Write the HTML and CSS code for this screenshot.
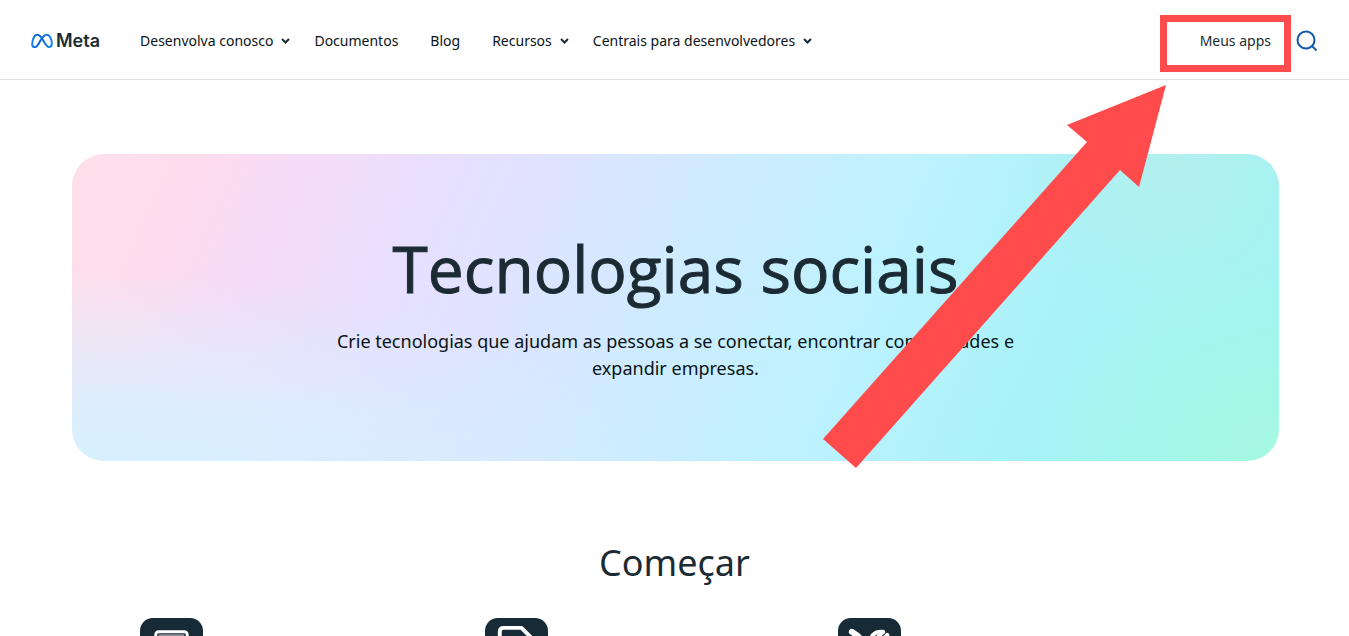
FILE: index.html
```html
<!DOCTYPE html>
<html lang="pt-BR">
<head>
<meta charset="utf-8">
<meta name="viewport" content="width=device-width, initial-scale=1">
<title>Meta for Developers</title>
<link rel="stylesheet" href="styles.css">
</head>
<body>
<header class="header">
  <a class="logo" href="#">
    <svg class="logo-mark" viewBox="0 0 22 16" aria-hidden="true">
      <defs><linearGradient id="mark" x1="0" x2="1"><stop offset="0" stop-color="#1280ee"/><stop offset=".35" stop-color="#0a62cf"/><stop offset="1" stop-color="#1687f2"/></linearGradient></defs>
      <path d="M1.2 11.2C1.2 6.500 3.300 1.800 6.300 1.800C9 1.800 10.500 4.500 12.500 7.900C14.500 11.400 15.800 14.100 18 14.100C20 14.100 20.800 12.600 20.800 10.600C20.800 5.900 18.700 1.800 15.700 1.800C12.900 1.800 11.200 4.600 9.300 7.800C7.300 11.300 6.200 14.100 3.900 14.100C2.100 14.100 1.200 12.900 1.200 11.200Z" fill="none" stroke="url(#mark)" stroke-width="2"/>
    </svg>
    <span>Meta</span>
  </a>
  <nav class="nav">
    <button class="nav-item" type="button">Desenvolva conosco<svg class="chevron" viewBox="0 0 9 6" aria-hidden="true"><path d="M1 1l3.500 3.500L8 1"/></svg></button>
    <a class="nav-item nav-link" href="#">Documentos</a>
    <a class="nav-item nav-link" href="#">Blog</a>
    <button class="nav-item" type="button">Recursos<svg class="chevron" viewBox="0 0 9 6" aria-hidden="true"><path d="M1 1l3.500 3.500L8 1"/></svg></button>
    <button class="nav-item" type="button">Centrais para desenvolvedores<svg class="chevron" viewBox="0 0 9 6" aria-hidden="true"><path d="M1 1l3.500 3.500L8 1"/></svg></button>
  </nav>
  <div class="tools">
    <a class="my-apps" href="#">Meus apps</a>
    <button class="search" type="button" aria-label="Pesquisar">
      <svg viewBox="0 0 22 22" aria-hidden="true"><circle cx="10" cy="10" r="8.500"/><path d="M16 16L20.500 20.500"/></svg>
    </button>
  </div>
</header>
<main>
  <section class="hero">
    <h1 class="hero-title">Tecnologias sociais</h1>
    <p class="hero-text">Crie tecnologias que ajudam as pessoas a se conectar, encontrar comunidades e expandir empresas.</p>
  </section>
  <section class="start">
    <h2 class="start-title">Começar</h2>
    <div class="cards">
      <svg class="card-icon" viewBox="0 0 64 64" aria-hidden="true"><rect width="64" height="64" rx="13" fill="#172b36"/><rect x="16" y="14" width="32" height="36" rx="3" fill="none" stroke="#fff" stroke-width="3"/><path d="M19 18h26" stroke="#8b9499" stroke-width="3"/></svg>
      <svg class="card-icon" viewBox="0 0 64 64" aria-hidden="true"><rect width="64" height="64" rx="13" fill="#172b36"/><path d="M15 50V14Q15 10 19 10H37L49 22V50Z" fill="none" stroke="#fff" stroke-width="4" stroke-linejoin="round"/></svg>
      <svg class="card-icon" viewBox="0 0 64 64" aria-hidden="true"><rect width="64" height="64" rx="13" fill="#172b36"/><path d="M14 14L20 18L48 49" fill="none" stroke="#fff" stroke-width="6" stroke-linecap="round"/><path d="M16 49L34 28C31 20 36 13 46 14L40 20L44 24L50 17C53 25 46 33 38 30L18 50Z" fill="#172b36" stroke="#fff" stroke-width="4" stroke-linejoin="round"/></svg>
    </div>
  </section>
</main>
<svg class="arrow" viewBox="0 0 343 384" aria-hidden="true"><path d="M343 1L244 41L264 58L0 355L33 384L297 86L316 103Z"/></svg>
</body>
</html>
```
FILE: styles.css
```css
*, *::after { box-sizing: border-box; }
html { scrollbar-width: none; }
body {
  position: relative;
  margin: 0;
  background: #fff;
  color: #1c2b33;
  font-family: "Noto Sans", "Open Sans", sans-serif;
}
a { color: inherit; text-decoration: none; }
button { padding: 0; border: 0; background: none; color: inherit; font: inherit; cursor: pointer; }
.header {
  display: flex;
  align-items: center;
  height: 80px;
  padding: 0 31px;
  border-bottom: 1px solid #dee1e4;
}
.logo {
  display: flex;
  align-items: center;
  gap: 3px;
  margin: 3px 40px 0 0;
  font-family: Inter, sans-serif;
  font-size: 18px;
  line-height: 24px;
  font-weight: 600;
}
.logo-mark { width: 22px; height: 16px; }
.nav { display: flex; align-items: center; gap: 24px; padding-top: 3px; }
.nav-item {
  display: flex;
  align-items: center;
  gap: 8px;
  color: #0a1317;
  font-size: 14px;
  line-height: 20px;
  white-space: nowrap;
}
.nav-link { padding-right: 8px; }
.chevron { width: 9px; height: 6px; fill: none; stroke: #1c2b33; stroke-width: 2; }
.tools { display: flex; align-items: center; gap: 25px; margin-left: auto; padding-top: 3px; }
.my-apps { position: relative; font-size: 14px; line-height: 20px; }
.my-apps::after {
  content: "";
  position: absolute;
  top: -16px;
  right: -20px;
  width: 131px;
  height: 57px;
  border: 7px solid #ff4b4b;
}
.search { width: 22px; height: 22px; }
.search svg { display: block; fill: none; stroke: #1259a8; stroke-width: 2; }
.hero {
  margin: 74px 70px 0 72px;
  padding: 70px 24px 79px;
  border-radius: 32px;
  background:
    radial-gradient(ellipse 20% 65% at 100% 100%, #a5f8e0 0%, #a5f8e000 100%),
    radial-gradient(ellipse 14% 60% at 91% 0%, #b2efed 0%, #b2efed00 100%),
    radial-gradient(ellipse 50% 72% at 0% 110%, #d4f2ff 0%, #d6f1ffd0 40%, #d7f0ff00 100%),
    linear-gradient(114deg, #ffe0ea 0%, #fddcee 10%, #f6dcf8 17%, #e7e0ff 29%, #dde4ff 38%, #cdecff 50%, #bdf2ff 64%, #a9f2f8 79%, #a2f4f3 90%);
  text-align: center;
}
.hero-title {
  margin: 0 0 14px;
  font-family: "Open Sans", sans-serif;
  font-size: 64px;
  line-height: 90px;
  font-weight: 500;
  -webkit-text-stroke: 1px #1c2b33;
}
.hero-text {
  max-width: 720px;
  margin: 0 auto;
  color: #0a1317;
  font-size: 18px;
  line-height: 27px;
}
.start { padding: 78px 72px 0; }
.start-title { margin: 0; font-size: 36px; line-height: 48px; font-weight: 400; text-align: center; }
.cards {
  display: grid;
  grid-template-columns: 345fr 353fr 439fr;
  padding: 31px 0 0 68px;
}
.card-icon { width: 63px; height: 63px; }
.arrow { position: absolute; top: 84px; right: 183px; width: 343px; height: 384px; fill: #ff4b4b; }
```
